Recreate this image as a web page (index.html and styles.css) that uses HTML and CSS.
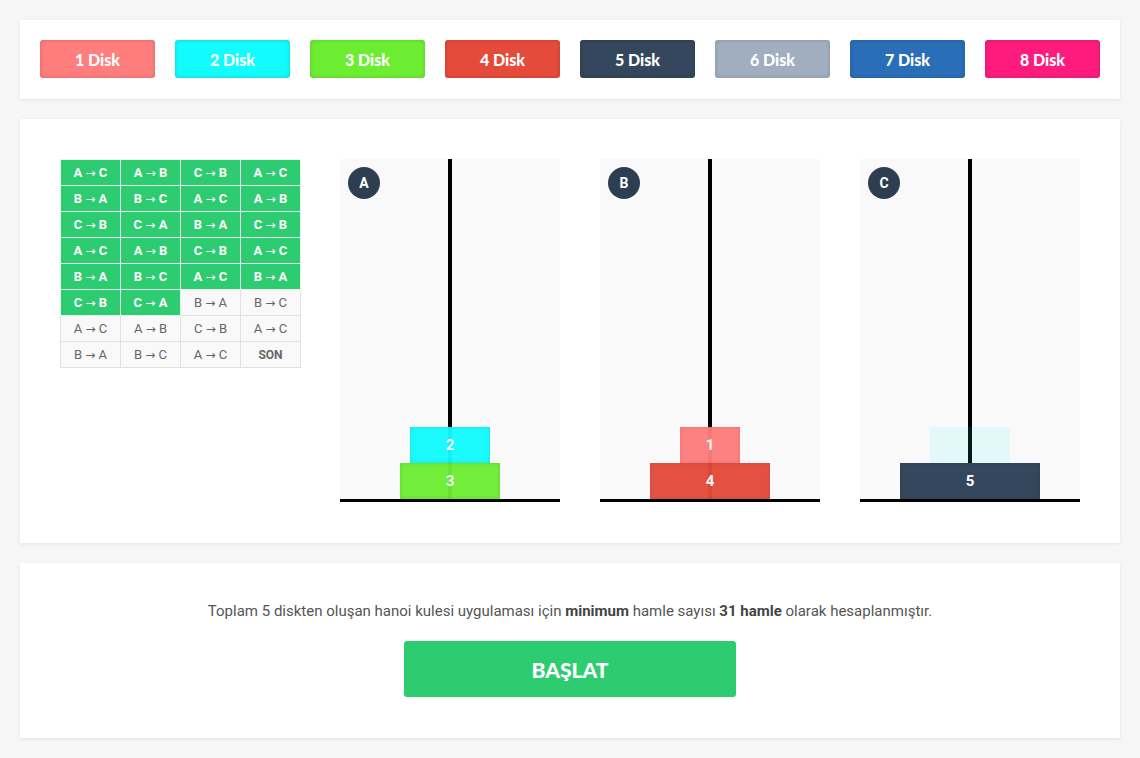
FILE: index.html
```html
<!DOCTYPE html>
<html lang="tr">
<head>
<meta charset="utf-8">
<title>Hanoi Kulesi</title>
<link rel="stylesheet" href="styles.css">
</head>
<body>
<div class="page">
  <section class="card buttons">
    <button class="btn c1">1 Disk</button>
    <button class="btn c2">2 Disk</button>
    <button class="btn c3">3 Disk</button>
    <button class="btn c4">4 Disk</button>
    <button class="btn c5">5 Disk</button>
    <button class="btn c6">6 Disk</button>
    <button class="btn c7">7 Disk</button>
    <button class="btn c8">8 Disk</button>
  </section>

  <section class="card game">
    <table class="moves">
      <tr><td class="done">A <i>→</i> C</td><td class="done">A <i>→</i> B</td><td class="done">C <i>→</i> B</td><td class="done">A <i>→</i> C</td></tr>
      <tr><td class="done">B <i>→</i> A</td><td class="done">B <i>→</i> C</td><td class="done">A <i>→</i> C</td><td class="done">A <i>→</i> B</td></tr>
      <tr><td class="done">C <i>→</i> B</td><td class="done">C <i>→</i> A</td><td class="done">B <i>→</i> A</td><td class="done">C <i>→</i> B</td></tr>
      <tr><td class="done">A <i>→</i> C</td><td class="done">A <i>→</i> B</td><td class="done">C <i>→</i> B</td><td class="done">A <i>→</i> C</td></tr>
      <tr><td class="done">B <i>→</i> A</td><td class="done">B <i>→</i> C</td><td class="done">A <i>→</i> C</td><td class="done">B <i>→</i> A</td></tr>
      <tr><td class="done">C <i>→</i> B</td><td class="done">C <i>→</i> A</td><td>B <i>→</i> A</td><td>B <i>→</i> C</td></tr>
      <tr><td>A <i>→</i> C</td><td>A <i>→</i> B</td><td>C <i>→</i> B</td><td>A <i>→</i> C</td></tr>
      <tr><td>B <i>→</i> A</td><td>B <i>→</i> C</td><td>A <i>→</i> C</td><td class="son">SON</td></tr>
    </table>

    <div class="towers">
      <div class="tower">
        <span class="label">A</span>
        <div class="pole"></div>
        <div class="stack">
          <div class="disk d2 w80">2</div>
          <div class="disk d3 w100">3</div>
        </div>
      </div>
      <div class="tower">
        <span class="label">B</span>
        <div class="pole"></div>
        <div class="stack">
          <div class="disk d1 w60">1</div>
          <div class="disk d4 w120">4</div>
        </div>
      </div>
      <div class="tower">
        <span class="label">C</span>
        <div class="pole"></div>
        <div class="stack">
          <div class="disk ghost w80"></div>
          <div class="disk d5 w140">5</div>
        </div>
      </div>
    </div>
  </section>

  <section class="card info">
    <p>Toplam 5 diskten oluşan hanoi kulesi uygulaması için <b>minimum</b> hamle sayısı <b>31 hamle</b> olarak hesaplanmıştır.</p>
    <button class="start">BAŞLAT</button>
  </section>
</div>
</body>
</html>
```

FILE: styles.css
```css
* { box-sizing: border-box; }
html, body { margin: 0; padding: 0; }
body {
  background: #f6f6f6;
  font-family: Roboto, "Liberation Sans", sans-serif;
  color: #555;
}
.page {
  padding: 20px;
  display: flex;
  flex-direction: column;
  gap: 20px;
}
.card {
  background: #fff;
  box-shadow: 0 1px 3px rgba(0,0,0,0.08);
}
.buttons {
  height: 79px;
  padding: 20px;
  display: flex;
  gap: 20px;
}
.btn {
  width: 115px;
  height: 38px;
  border: 0;
  border-radius: 3px;
  color: #fff;
  font-family: Lato, "Liberation Sans", sans-serif;
  font-weight: 900;
  font-size: 16px;
  box-shadow: inset 0 0 4px rgba(0,0,0,0.18);
  padding: 0;
}
.c1 { background: #ff7d7d; }
.c2 { background: #12fbfd; }
.c3 { background: #6ded32; }
.c4 { background: #e54b3a; }
.c5 { background: #34475c; }
.c6 { background: #a0aebf; }
.c7 { background: #296eb6; }
.c8 { background: #fd1c7e; }

.game {
  height: 424px;
  padding: 40px;
  display: flex;
  gap: 39px;
  align-items: flex-start;
}
.moves {
  border-collapse: collapse;
  font-size: 13px;
  flex: none;
  table-layout: fixed;
}
.moves td {
  width: 60px;
  height: 26px;
  text-align: center;
  border: 1px solid #e2e2e2;
  background: #f9f9f9;
  color: #666;
  padding: 0;
  white-space: nowrap;
}
.moves td i {
  font-style: normal;
  font-family: "DejaVu Sans", sans-serif;
  font-size: 12px;
  font-weight: 400;
}
.moves td.done {
  background: #2ecc71;
  color: #fff;
  font-weight: 700;
  border-color: #e8f7ee;
}
.moves td.son { font-weight: 700; color: #666; font-size: 12px; }
.towers {
  display: flex;
  gap: 40px;
}
.tower {
  position: relative;
  width: 220px;
  height: 343px;
  background: #f9f9f9;
  border-bottom: 3px solid #000;
  display: flex;
  flex-direction: column;
  justify-content: flex-end;
  align-items: center;
}
.pole {
  position: absolute;
  top: 0;
  bottom: 0;
  left: 108px;
  width: 4px;
  background: #000;
}
.label {
  position: absolute;
  top: 8px;
  left: 8px;
  width: 32px;
  height: 32px;
  border-radius: 50%;
  background: #2c3e50;
  color: #fff;
  font-size: 14px;
  font-weight: 700;
  display: flex;
  align-items: center;
  justify-content: center;
}
.stack {
  display: flex;
  flex-direction: column;
  align-items: center;
  position: relative;
}
.disk {
  height: 36px;
  color: #fff;
  font-weight: 700;
  font-size: 15px;
  display: flex;
  align-items: center;
  justify-content: center;
  opacity: 0.96;
  box-shadow: inset 0 0 4px rgba(0,0,0,0.12);
}
.w60 { width: 60px; }
.w80 { width: 80px; }
.w100 { width: 100px; }
.w120 { width: 120px; }
.w140 { width: 140px; }
.d1 { background: #ff7d7d; }
.d2 { background: #12fbfd; }
.d3 { background: #6ded32; }
.d4 { background: #e54b3a; }
.d5 { background: #34475c; opacity: 1; }
.ghost { background: #12fbfd; opacity: 0.1; box-shadow: none; }

.info {
  height: 175px;
  display: flex;
  flex-direction: column;
  align-items: center;
  padding-top: 39px;
}
.info p {
  margin: 0;
  font-size: 15px;
  color: #555;
  line-height: 18px;
}
.info b { font-weight: 700; color: #444; }
.start {
  margin-top: 21px;
  width: 332px;
  height: 56px;
  border: 0;
  border-radius: 3px;
  background: #2ecc71;
  color: #fff;
  font-family: Lato, "Liberation Sans", sans-serif;
  font-weight: 900;
  font-size: 21px;
}
```
